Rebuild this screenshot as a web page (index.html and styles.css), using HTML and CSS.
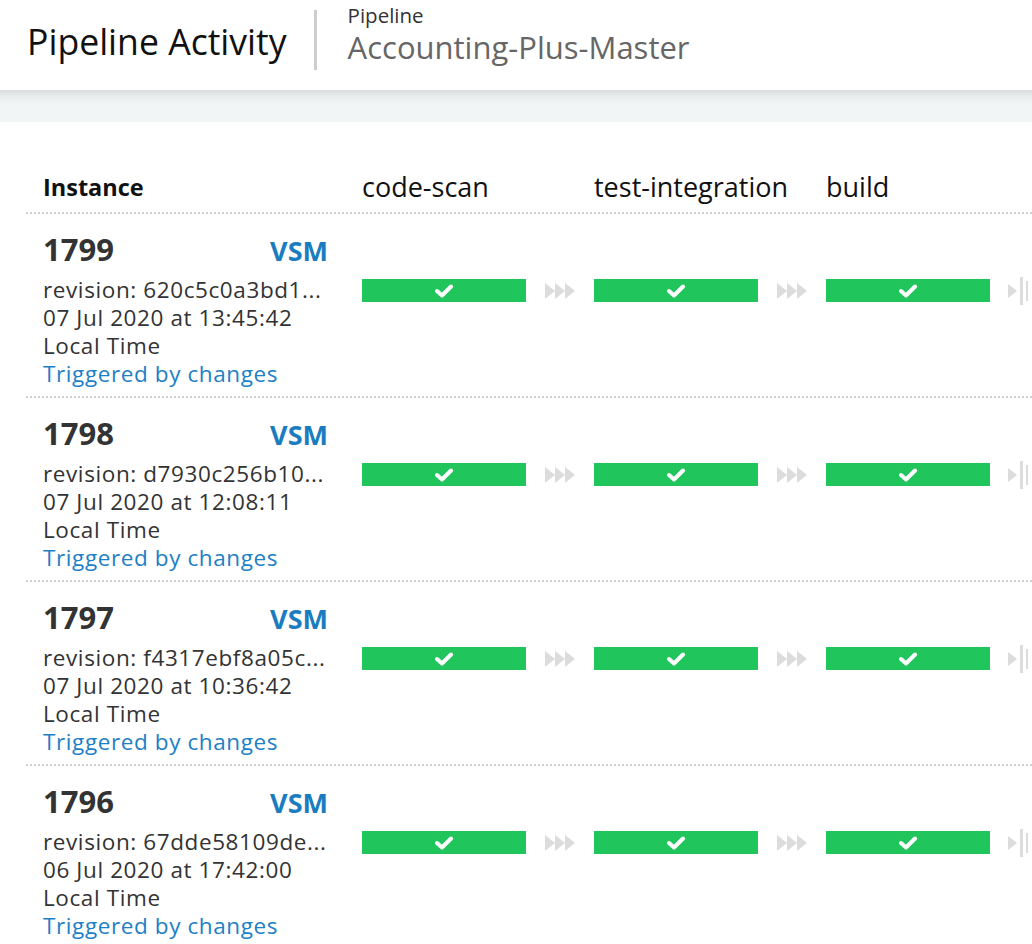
FILE: index.html
```html
<!DOCTYPE html>
<html lang="en">
<head>
<meta charset="utf-8">
<title>Pipeline Activity</title>
<link rel="stylesheet" href="styles.css">
</head>
<body>
<header class="top">
  <h1 class="title">Pipeline Activity</h1>
  <div class="sep"></div>
  <div class="pipe">
    <div class="pipe-label">Pipeline</div>
    <div class="pipe-name">Accounting-Plus-Master</div>
  </div>
</header>
<div class="band"></div>
<main class="activity">
  <div class="row head">
    <div class="inst-col"><span class="inst-title">Instance</span></div>
    <div class="stage-col stage-name">code-scan</div>
    <div class="stage-col stage-name">test-integration</div>
    <div class="stage-col stage-name">build</div>
  </div>

  <div class="row">
    <div class="inst-col">
      <div class="inst-top"><span class="num">1799</span><a class="vsm">VSM</a></div>
      <div class="meta">
        <div>revision: 620c5c0a3bd1...</div>
        <div>07 Jul 2020 at 13:45:42</div>
        <div>Local Time</div>
        <a class="trig">Triggered by changes</a>
      </div>
    </div>
    <div class="stage-col"><div class="bar"><svg class="check" viewBox="0 0 20 15" width="20" height="15"><path d="M3 8 L8 12.5 L17 3.5" /></svg></div><div class="conn"><svg viewBox="0 0 31 16" width="31" height="16"><polygon points="0,0 10,8 0,16"/><polygon points="10,0 20,8 10,16"/><polygon points="20,0 30,8 20,16"/></svg></div></div>
    <div class="stage-col"><div class="bar"><svg class="check" viewBox="0 0 20 15" width="20" height="15"><path d="M3 8 L8 12.5 L17 3.5" /></svg></div><div class="conn"><svg viewBox="0 0 31 16" width="31" height="16"><polygon points="0,0 10,8 0,16"/><polygon points="10,0 20,8 10,16"/><polygon points="20,0 30,8 20,16"/></svg></div></div>
    <div class="stage-col"><div class="bar"><svg class="check" viewBox="0 0 20 15" width="20" height="15"><path d="M3 8 L8 12.5 L17 3.5" /></svg></div><div class="conn end"><svg viewBox="0 0 20 28" width="20" height="28"><polygon points="0,7 9,14 0,21"/><rect x="12" y="0" width="3" height="28"/><rect x="18" y="4" width="3" height="20"/></svg></div></div>
  </div>

  <div class="row">
    <div class="inst-col">
      <div class="inst-top"><span class="num">1798</span><a class="vsm">VSM</a></div>
      <div class="meta">
        <div>revision: d7930c256b10...</div>
        <div>07 Jul 2020 at 12:08:11</div>
        <div>Local Time</div>
        <a class="trig">Triggered by changes</a>
      </div>
    </div>
    <div class="stage-col"><div class="bar"><svg class="check" viewBox="0 0 20 15" width="20" height="15"><path d="M3 8 L8 12.5 L17 3.5" /></svg></div><div class="conn"><svg viewBox="0 0 31 16" width="31" height="16"><polygon points="0,0 10,8 0,16"/><polygon points="10,0 20,8 10,16"/><polygon points="20,0 30,8 20,16"/></svg></div></div>
    <div class="stage-col"><div class="bar"><svg class="check" viewBox="0 0 20 15" width="20" height="15"><path d="M3 8 L8 12.5 L17 3.5" /></svg></div><div class="conn"><svg viewBox="0 0 31 16" width="31" height="16"><polygon points="0,0 10,8 0,16"/><polygon points="10,0 20,8 10,16"/><polygon points="20,0 30,8 20,16"/></svg></div></div>
    <div class="stage-col"><div class="bar"><svg class="check" viewBox="0 0 20 15" width="20" height="15"><path d="M3 8 L8 12.5 L17 3.5" /></svg></div><div class="conn end"><svg viewBox="0 0 20 28" width="20" height="28"><polygon points="0,7 9,14 0,21"/><rect x="12" y="0" width="3" height="28"/><rect x="18" y="4" width="3" height="20"/></svg></div></div>
  </div>

  <div class="row">
    <div class="inst-col">
      <div class="inst-top"><span class="num">1797</span><a class="vsm">VSM</a></div>
      <div class="meta">
        <div>revision: f4317ebf8a05c...</div>
        <div>07 Jul 2020 at 10:36:42</div>
        <div>Local Time</div>
        <a class="trig">Triggered by changes</a>
      </div>
    </div>
    <div class="stage-col"><div class="bar"><svg class="check" viewBox="0 0 20 15" width="20" height="15"><path d="M3 8 L8 12.5 L17 3.5" /></svg></div><div class="conn"><svg viewBox="0 0 31 16" width="31" height="16"><polygon points="0,0 10,8 0,16"/><polygon points="10,0 20,8 10,16"/><polygon points="20,0 30,8 20,16"/></svg></div></div>
    <div class="stage-col"><div class="bar"><svg class="check" viewBox="0 0 20 15" width="20" height="15"><path d="M3 8 L8 12.5 L17 3.5" /></svg></div><div class="conn"><svg viewBox="0 0 31 16" width="31" height="16"><polygon points="0,0 10,8 0,16"/><polygon points="10,0 20,8 10,16"/><polygon points="20,0 30,8 20,16"/></svg></div></div>
    <div class="stage-col"><div class="bar"><svg class="check" viewBox="0 0 20 15" width="20" height="15"><path d="M3 8 L8 12.5 L17 3.5" /></svg></div><div class="conn end"><svg viewBox="0 0 20 28" width="20" height="28"><polygon points="0,7 9,14 0,21"/><rect x="12" y="0" width="3" height="28"/><rect x="18" y="4" width="3" height="20"/></svg></div></div>
  </div>

  <div class="row">
    <div class="inst-col">
      <div class="inst-top"><span class="num">1796</span><a class="vsm">VSM</a></div>
      <div class="meta">
        <div>revision: 67dde58109de...</div>
        <div>06 Jul 2020 at 17:42:00</div>
        <div>Local Time</div>
        <a class="trig">Triggered by changes</a>
      </div>
    </div>
    <div class="stage-col"><div class="bar"><svg class="check" viewBox="0 0 20 15" width="20" height="15"><path d="M3 8 L8 12.5 L17 3.5" /></svg></div><div class="conn"><svg viewBox="0 0 31 16" width="31" height="16"><polygon points="0,0 10,8 0,16"/><polygon points="10,0 20,8 10,16"/><polygon points="20,0 30,8 20,16"/></svg></div></div>
    <div class="stage-col"><div class="bar"><svg class="check" viewBox="0 0 20 15" width="20" height="15"><path d="M3 8 L8 12.5 L17 3.5" /></svg></div><div class="conn"><svg viewBox="0 0 31 16" width="31" height="16"><polygon points="0,0 10,8 0,16"/><polygon points="10,0 20,8 10,16"/><polygon points="20,0 30,8 20,16"/></svg></div></div>
    <div class="stage-col"><div class="bar"><svg class="check" viewBox="0 0 20 15" width="20" height="15"><path d="M3 8 L8 12.5 L17 3.5" /></svg></div><div class="conn end"><svg viewBox="0 0 20 28" width="20" height="28"><polygon points="0,7 9,14 0,21"/><rect x="12" y="0" width="3" height="28"/><rect x="18" y="4" width="3" height="20"/></svg></div></div>
  </div>
</main>
</body>
</html>
```

FILE: styles.css
```css
html, body {
  margin: 0;
  padding: 0;
  background: #fff;
}
body {
  width: 1032px;
  height: 944px;
  overflow: hidden;
  font-family: "Open Sans", "Noto Sans", sans-serif;
  color: #333;
}

.top {
  height: 90px;
  display: flex;
  align-items: flex-start;
  padding-left: 27px;
  background: #fff;
  position: relative;
  z-index: 1;
}
.title {
  margin: 17px 0 0 0;
  font-size: 35.6px;
  line-height: 48px;
  font-weight: 500;
  color: #111;
  white-space: nowrap;
}
.sep {
  width: 3px;
  height: 60px;
  margin: 10px 31px 0 27px;
  background: #cdcdcd;
}
.pipe {
  padding-top: 2px;
}
.pipe-label {
  font-size: 20.5px;
  line-height: 26px;
  font-weight: 500;
  color: #333;
}
.pipe-name {
  font-size: 31px;
  line-height: 38px;
  color: #666;
  white-space: nowrap;
}

.band {
  height: 32px;
  background: linear-gradient(to bottom, #d8dbdc 0px, #e9eced 6px, #f2f5f6 14px, #f3f6f7 100%);
}

.activity {
  margin-left: 26px;
}
.row {
  display: flex;
  border-bottom: 2px dotted #cfcfcf;
  height: 182px;
}
.row.head {
  height: 30px;
  padding: 50px 0 10px;
  align-items: center;
}
.inst-col {
  flex: none;
  width: 285px;
  padding: 0 34px 0 17px;
}
.inst-title {
  font-size: 23.5px;
  line-height: 30px;
  font-weight: 700;
  color: #111;
}
.stage-col {
  flex: none;
  width: 232px;
  display: flex;
  align-items: flex-start;
}
.stage-name {
  font-size: 27px;
  line-height: 30px;
  font-weight: 500;
  color: #111;
  white-space: nowrap;
}

.row:not(.head) .inst-col {
  padding-top: 15px;
}
.inst-top {
  display: flex;
  justify-content: space-between;
  align-items: baseline;
  height: 40px;
  line-height: 40px;
}
.num {
  font-size: 31px;
  font-weight: 700;
  color: #333;
}
.vsm {
  font-size: 27px;
  font-weight: 700;
  color: #1b7cc0;
}
.meta {
  margin-top: 7px;
  font-size: 22.5px;
  letter-spacing: 0.6px;
  line-height: 28px;
  color: #333;
  white-space: nowrap;
}
.trig {
  display: block;
  color: #1e80c6;
}

.bar {
  margin-top: 65px;
  width: 164px;
  height: 23px;
  background: #20c65b;
  display: flex;
  align-items: center;
  justify-content: center;
}
.check {
  display: block;
  fill: none;
  stroke: #fff;
  stroke-width: 4;
  stroke-linecap: round;
  stroke-linejoin: round;
}
.conn {
  margin-top: 69px;
  width: 68px;
  height: 16px;
  display: flex;
  justify-content: center;
}
.conn svg {
  display: block;
  fill: #dcdcdc;
}
.conn.end {
  margin-top: 63px;
  height: 28px;
  justify-content: flex-start;
  padding-left: 18px;
  width: 50px;
}
```
